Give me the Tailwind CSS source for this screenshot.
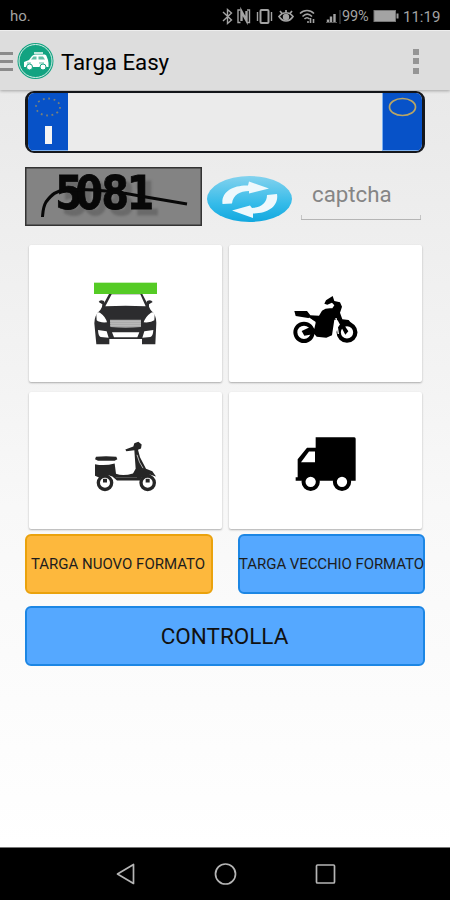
<!DOCTYPE html>
<html lang="it">
<head>
    <meta charset="UTF-8">
    <meta name="viewport" content="width=device-width, initial-scale=1.0">
    <title>Targa Easy</title>
    <script src="https://cdn.jsdelivr.net/npm/@tailwindcss/browser@4"></script>
</head>
<body class="w-[450px] h-[900px] overflow-hidden flex flex-col bg-white font-[Roboto,sans-serif] text-black">

    <!-- Status bar -->
    <div class="h-[30px] shrink-0 bg-black flex items-center pl-[10px] pr-[10px] pt-[2px] text-[#a3a3a3] text-[15px]">
        <span class="grow">ho.</span>
        <svg class="w-[120px] h-[28px]" viewBox="0 0 120 28" fill="none" stroke="#a3a3a3" stroke-width="1.4">
            <!-- bluetooth -->
            <path d="M1 10l8.500 8-4 3.500v-14l4 3.500-8.500 8"/>
            <!-- nfc -->
            <path d="M18.500 8H16v12.500h2.500M25 8h2.500v12.500H25" />
            <path d="M19.500 19v-9.500l5 9V9" stroke-width="2.400"/>
            <!-- vibration -->
            <rect x="38.500" y="8" width="8" height="13" rx="1" stroke-width="2"/>
            <path d="M35.500 10v9M49.500 10v9"/>
            <!-- eye -->
            <path d="M57 14.500c4-5 10-5 14 0c-4 6-10 6-14 0zM58 9l2 2.500M64 8v3M70 9l-2 2.500" stroke-width="1.700"/>
            <circle cx="64" cy="15" r="2.500" fill="#a3a3a3"/>
            <!-- wifi -->
            <path d="M78 11.500c4-4 10-4 14 0M80.500 14.500c3-3 6.500-3 9.500 0M82.500 17c1.500-1.500 3.500-1.500 5 0" stroke-width="1.600"/>
            <path d="M85 20h2M88.500 16v5M91.500 21v-4" stroke-width="1.600"/>
            <!-- signal -->
            <path d="M106 20v-2.500M109 20v-5.500M112.500 20V12" stroke-width="2.400"/>
            <path d="M104 20.500h11M118 8v14" stroke="#555" stroke-width="1"/>
        </svg>
        <span class="w-[28px] text-[14.500px] leading-[20px] pt-px tracking-[-.1px] whitespace-nowrap">99%</span>
        <svg class="w-[27px] h-[14px] ml-[3px]" viewBox="0 0 27 14">
            <rect x="1" y="1.500" width="21.500" height="11" fill="#a3a3a3" stroke="#777"/>
            <rect x="23.500" y="4.500" width="2" height="5" fill="#999"/>
        </svg>
        <span class="w-[37px] ml-[3px] text-[15px] leading-[20px] pt-px whitespace-nowrap">11:19</span>
    </div>

    <!-- Action bar -->
    <div class="h-[60px] shrink-0 bg-[#dddddd] border-t border-[#eeeeee] flex items-center pt-[2px] relative shadow-[0_1px_3px_rgba(0,0,0,0.3)]">
        <div class="w-[13px] flex flex-col gap-[5.500px]">
            <div class="h-[2.500px] bg-[#8b8b8b]"></div>
            <div class="h-[2.500px] bg-[#8b8b8b]"></div>
            <div class="h-[2.500px] bg-[#8b8b8b]"></div>
        </div>
        <svg class="w-[37px] h-[38px] ml-[4px] -mt-[2px]" viewBox="0 0 37 38">
            <circle cx="18.500" cy="19" r="18" fill="#12a381"/>
            <circle cx="18.500" cy="19" r="16.500" fill="none" stroke="#d5ece6" stroke-width="1"/>
            <path d="M7 25v-5l5-2 3-4c1-1 2-1.500 3-1.500h9c1.500 0 2 .5 2.500 1.500l1.500 4 .5 3v4z" fill="#fff"/>
            <path d="M14 17.500l2.500-3h3v3zM21.500 17.500v-3H26l2 3z" fill="#5fbfa6"/>
            <path d="M17 11h9" stroke="#fff" stroke-width="1.500"/>
            <path d="M10 21h4M22 21h5" stroke="#5fbfa6"/>
            <circle cx="12.500" cy="25" r="3" fill="#fff" stroke="#12a381"/>
            <circle cx="26" cy="25" r="3" fill="#fff" stroke="#12a381"/>
        </svg>
        <span class="ml-[7px] text-[22.300px] leading-none pt-px tracking-[-.05px] grow">Targa Easy</span>
        <div class="flex flex-col gap-[3.500px] mr-[31px] -mt-px">
            <div class="w-[6px] h-[6px] bg-[#959595]"></div>
            <div class="w-[6px] h-[6px] bg-[#959595]"></div>
            <div class="w-[6px] h-[6px] bg-[#959595]"></div>
        </div>
    </div>

    <!-- Content -->
    <main class="grow flex flex-col px-[25px] pt-[1px] bg-linear-to-b from-[#e9e9e9] via-[#f8f8f8] via-55% to-white">

        <!-- Licence plate field -->
        <div class="h-[62px] shrink-0 rounded-[9px] border-[2.500px] border-x-[3px] border-[#15171c] bg-[#ebebeb] flex justify-between overflow-hidden">
            <div class="w-[40px] bg-[#0752c8] flex flex-col items-center border-b border-[#7db1f0]">
                <svg class="w-[30px] h-[22px] mt-[3px]" viewBox="0 0 30 22">
                    <ellipse cx="15" cy="11" rx="12" ry="8.500" fill="none" stroke="#77807c" stroke-width="1.800" stroke-dasharray="1.800 3.600"/>
                </svg>
                <div class="w-[7px] h-[18px] mt-[8px] bg-[#f4f4f4]"></div>
            </div>
            <div class="w-[40px] bg-[#0752c8] flex justify-center border-b border-l border-[#7db1f0]">
                <svg class="w-[30px] h-[22px] mt-[3px]" viewBox="0 0 30 22">
                    <ellipse cx="14.500" cy="11" rx="13" ry="8.500" fill="none" stroke="#b9a565" stroke-width="1.700"/>
                </svg>
            </div>
        </div>

        <!-- Captcha row -->
        <div class="mt-[14px] h-[59px] shrink-0 flex items-center">
            <svg class="w-[177px] h-[59px] shrink-0" viewBox="0 0 177 59" font-family="DejaVu Sans" font-weight="bold" font-size="47">
                <rect x=".75" y=".75" width="175.500" height="57.500" fill="#838383" stroke="#333" stroke-width="1.500"/>
                <g class="drop-shadow-[6px_6px_1px_#6a6a6a]" fill="#080808" stroke="#080808" stroke-width=".8">
                    <text transform="scale(.84 1)" y="41.500" x="36 60 91 121">5081</text>
                </g>
                <path d="M17.500 50C18 44 18 40 21 35C27 27 31 24 40 23C65 21 95 25 115 29L162 37" fill="none" stroke="#080808" stroke-width="3"/>
            </svg>
            <svg class="w-[86px] h-[48px] ml-[5px] mt-[4px] shrink-0" viewBox="0 0 86 48">
                <defs>
                    <linearGradient id="sky" x1="0" y1="0" x2="0" y2="1">
                        <stop offset="0" stop-color="#83d2ee"/>
                        <stop offset=".6" stop-color="#35bbe9"/>
                        <stop offset="1" stop-color="#12a8df"/>
                    </linearGradient>
                </defs>
                <ellipse cx="42.500" cy="24" rx="42.500" ry="23" fill="url(#sky)"/>
                <path d="M15.500 29C14 17 26 10 41 10.500L42 6.500L62 13.500L42 18.500V16C33 16 26 20 25 28.500z" fill="#eef8fc"/>
                <path d="M70 19C72 31 61 38.500 46 38.500V43L25 35.500L43 30.500L45 33C54 32.500 60 28 60 20z" fill="#eef8fc"/>
            </svg>
            <div class="w-[120px] h-[40px] ml-[8px] mt-[6px] pl-[11px] text-[22.300px] leading-[28px] text-[#858585] border-b border-[#b5b5b5] relative before:absolute before:left-0 before:bottom-0 before:w-px before:h-[4px] before:bg-[#c5c5c5] after:absolute after:right-0 after:bottom-0 after:w-px after:h-[4px] after:bg-[#c5c5c5]">captcha</div>
        </div>

        <!-- Vehicle types -->
        <div class="mt-[19px] mx-[4px] grid grid-cols-[193px_193px] gap-x-[7px] gap-y-[10px]">
            <div class="h-[137px] bg-white rounded-[2px] shadow-[0_1px_2px_rgba(0,0,0,0.3)] flex items-center justify-center">
                <svg class="w-[90px] h-[90px]" viewBox="4 -3 270 270">
                    <path d="M88 72H188L213 120Q230 135 230 158L227 223H187V207H89V223H50L44 160Q44 135 62 120z" fill="#2c2c2e"/>
                    <path d="M96 73H182L198 109Q138 105 77 109z" fill="#fff"/>
                    <path d="M50 134Q54 124 61 128Q78 140 82 157Q60 159 51 151zM225 134Q221 124 214 128Q197 140 192 157Q214 159 224 151z" fill="#fff"/>
                    <path d="M91 149H184V171Q138 175 92 171z" fill="#a9a9a9"/>
                    <path d="M91 154H184M91 160H184M91 166H184" stroke="#c4c4c4" stroke-width="2"/>
                    <path d="M55 180L81 184L87 203L63 201Q56 199 55 180zM221 180L194 184L188 203L212 201Q220 199 221 180zM97 187H179L173 202H103z" fill="#fff"/>
                    <path d="M57 96Q61 87 73 93L76 102L67 114L68 103zM219 96Q214 87 202 93L199 102L208 114L208 103z" fill="#2c2c2e"/>
                    <rect x="43" y="38" width="189" height="34" fill="#55cb25"/>
                </svg>
            </div>
            <div class="h-[137px] bg-white rounded-[2px] shadow-[0_1px_2px_rgba(0,0,0,0.3)] flex items-center justify-center">
                <svg class="w-[90px] h-[90px]" viewBox="4 -35 270 270">
                    <circle cx="73" cy="155" r="26" fill="none" stroke="#000" stroke-width="12"/>
                    <circle cx="202" cy="155" r="25" fill="none" stroke="#000" stroke-width="13"/>
                    <path d="M44 91H82L92 104L118 105L127 90Q138 81 158 83L164 74L157 66L143 72L134 69L139 59L159 46L164 61L181 65L187 78L181 96L188 116L207 118L222 137L202 130L190 128L206 152L197 162L174 119L164 117L157 164L140 171L111 168L104 160L74 165L66 151L90 140L104 144L108 126L90 113L48 106z" fill="#000"/>
                    <path d="M87 112L107 126M169 112L176 160" stroke="#fff" stroke-width="4"/>
                </svg>
            </div>
            <div class="h-[137px] bg-white rounded-[2px] shadow-[0_1px_2px_rgba(0,0,0,0.3)] flex items-center justify-center">
                <svg class="w-[90px] h-[90px]" viewBox="4 -28.500 270 270">
                    <circle cx="76" cy="172" r="20" fill="none" stroke="#262626" stroke-width="10"/>
                    <circle cx="204" cy="172" r="20" fill="none" stroke="#262626" stroke-width="10"/>
                    <path d="M49 94Q79 90 110 94L113 101L105 106H55L46 101z" fill="#262626"/>
                    <path d="M46 116Q75 122 105 114L109 145Q130 153 160 144L168 130L164 74L140 77L137 72L161 63L164 53L176 49L186 57L184 69L175 73L181 95L199 130L218 137L229 153L213 148Q187 149 181 165H112L98 153Q76 144 58 156L46 151z" fill="#262626"/>
                    <path d="M172 88Q178 112 190 128" fill="none" stroke="#fff" stroke-width="2"/>
                    <path d="M108 156H172" stroke="#666" stroke-width="2"/>
                    <path d="M70 160H82V171H70zM198 160H210V171H198z" fill="#262626"/>
                </svg>
            </div>
            <div class="h-[137px] bg-white rounded-[2px] shadow-[0_1px_2px_rgba(0,0,0,0.3)] flex items-center justify-center">
                <svg class="w-[90px] h-[90px]" viewBox="4 -28.500 270 270">
                    <path d="M108 35H224Q228 35 228 40V166H48V155H54V101L82 67H108z" fill="#000"/>
                    <path d="M88 78H106V110H64z" fill="#fff"/>
                    <circle cx="93" cy="169" r="21.500" fill="#fff" stroke="#000" stroke-width="12"/>
                    <circle cx="187" cy="169" r="21.500" fill="#fff" stroke="#000" stroke-width="12"/>
                </svg>
            </div>
        </div>

        <!-- Plate format -->
        <div class="mt-[5px] flex justify-between">
            <div class="w-[188px] h-[60px] rounded-[6px] bg-[#fdb83d] border-2 border-[#eaa20d] flex items-center justify-center text-[15px] whitespace-nowrap text-[#1d1d1d]"><span class="-ml-[2px]">TARGA NUOVO FORMATO</span></div>
            <div class="w-[187px] h-[60px] rounded-[6px] bg-[#55a8ff] border-2 border-[#1c86e4] flex items-center justify-center text-[15px] tracking-[-.08px] whitespace-nowrap text-[#1d1d1d]">TARGA VECCHIO FORMATO</div>
        </div>

        <div class="mt-[12px] h-[60px] rounded-[6px] bg-[#55a8ff] border-2 border-[#1c86e4] flex items-center justify-center text-[22.500px] text-[#111]"><span class="pt-[2px] -ml-px">CONTROLLA</span></div>
    </main>

    <!-- Navigation bar -->
    <div class="h-[53px] shrink-0 bg-black border-t border-[#777] flex justify-center">
        <svg class="w-[290px] h-[52px]" viewBox="0 0 290 52" fill="none" stroke="#b5b5b5" stroke-width="1.700" stroke-linejoin="round">
            <path d="M53.500 16.500v19L37.500 26z"/>
            <circle cx="145.500" cy="26" r="10"/>
            <rect x="236.500" y="17" width="18" height="18" rx="1"/>
        </svg>
    </div>

</body>
</html>
